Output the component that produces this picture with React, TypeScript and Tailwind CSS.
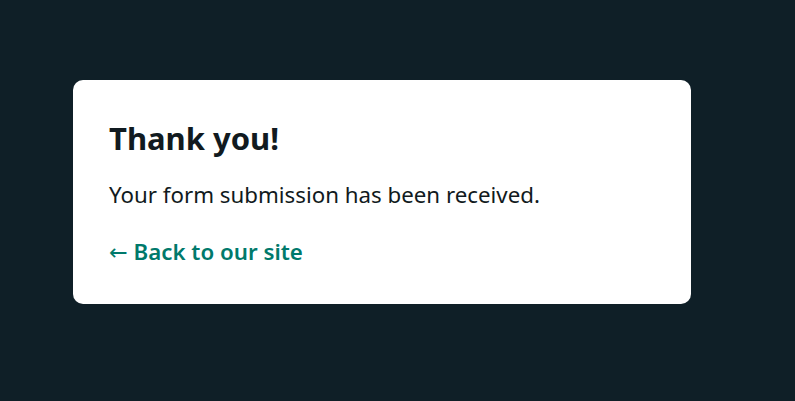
export default function App() {
  return (
    <div className="min-h-[401px] w-full bg-[#0f1f27] pl-[73px] pt-[80px] font-['Noto_Sans',sans-serif]">
      <div className="w-[618px] rounded-[10px] bg-white px-[36px] pt-[39px] pb-[36px]">
        <h1 className="text-[31px] font-bold leading-[38px] text-[#111a20]">Thank you!</h1>
        <p className="mt-[22px] text-[22.3px] leading-[32px] text-[#111a20]">
          Your form submission has been received.
        </p>
        <a href="#" className="mt-[25px] block text-[22.3px] font-semibold leading-[32px] text-[#00796b]">
          <span className="font-['DejaVu_Sans',sans-serif] font-normal">←</span> Back to our site
        </a>
      </div>
    </div>
  );
}
